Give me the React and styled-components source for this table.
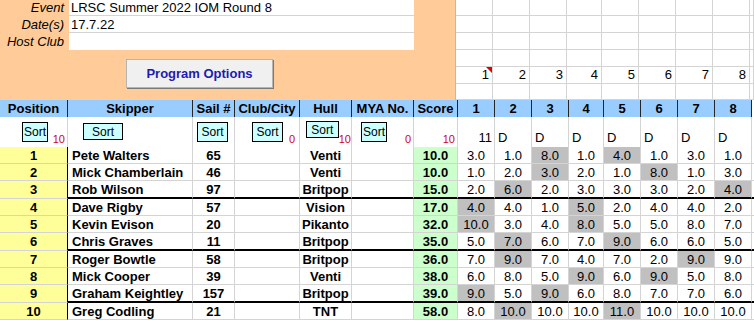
import React from "react";
import styled, { createGlobalStyle } from "styled-components";

const GRID = "#D4D4D4";
const FONT = '"Liberation Sans", Arial, sans-serif';
const COLS = [68, 125, 42, 65, 52, 62, 44, 37, 37, 37, 35, 37, 37, 37, 37];
const RACE_W = COLS.slice(7);

const GlobalStyle = createGlobalStyle`
  html, body { margin: 0; padding: 0; background: #fff; }
  body { font-family: ${FONT}; color: #000; }
  #root { width: 754px; height: 320px; overflow: hidden; }
`;

const Sheet = styled.div`
  display: flex;
  flex-direction: column;
  width: 754px;
`;

const TopBand = styled.div`
  display: flex;
  height: 100px;
`;

const EventPanel = styled.div`
  box-sizing: border-box;
  width: 458px;
  background: #ffcc99;
  border-right: 1px solid #c4b8aa;
  display: flex;
  flex-direction: column;
`;

const InfoGrid = styled.div`
  display: grid;
  grid-template-columns: 69px 345px;
  grid-template-rows: 16px 17px 17px;
`;

const InfoLabel = styled.div`
  font-style: italic;
  font-size: 13px;
  text-align: right;
  padding-right: 5px;
  line-height: ${(p) => p.$lh}px;
  box-sizing: border-box;
`;

const InfoValue = styled.div`
  box-sizing: border-box;
  background: #fff;
  font-size: 13px;
  padding-left: 2px;
  line-height: ${(p) => p.$lh}px;
  border-bottom: ${(p) => (p.$last ? "none" : `1px solid ${GRID}`)};
`;

const OptionsButton = styled.button`
  box-sizing: border-box;
  margin: 9px 0 0 126px;
  width: 147px;
  height: 29px;
  padding: 0;
  background: #f0f0f0;
  border: 1px solid #b4b4b4;
  box-shadow: 1px 1px 0 #7a7a7a;
  font: bold 13px ${FONT};
  color: #1c1cb0;
  cursor: pointer;
`;

const RaceTop = styled.div`
  flex: 1;
  display: grid;
  grid-template-columns: ${RACE_W.map((w) => w + "px").join(" ")} 1fr;
  grid-template-rows: 16px 17px 17px 17px 17px 16px;
`;

const TopCell = styled.div`
  position: relative;
  box-sizing: border-box;
  border-right: 1px solid ${GRID};
  border-bottom: 1px solid ${GRID};
  font-size: 13px;
  text-align: right;
  padding-right: 3px;
  line-height: 16px;
  ${(p) =>
    p.$note &&
    `&::after {
      content: "";
      position: absolute;
      top: 0;
      right: 0;
      border-top: 6px solid #e00000;
      border-left: 6px solid transparent;
    }`}
`;

const Table = styled.div`
  display: grid;
  grid-template-columns: ${COLS.map((w) => w + "px").join(" ")} 1fr;
`;

const HeadCell = styled.div`
  box-sizing: border-box;
  height: 17px;
  background: ${(p) => (p.$blank ? "#fff" : "#99ccff")};
  border-right: ${(p) => (p.$blank ? "none" : "1px solid #262626")};
  font-size: 13px;
  font-weight: 700;
  text-align: center;
  line-height: 17px;
  white-space: nowrap;
`;

const SortCell = styled.div`
  box-sizing: border-box;
  height: 30px;
  display: flex;
  align-items: flex-start;
  padding: ${(p) => p.$pt ?? 5}px 0 0 ${(p) => p.$pl ?? 0}px;
  border-right: ${(p) => (p.$blank ? "none" : `1px solid ${GRID}`)};
`;

const SortButton = styled.button`
  box-sizing: border-box;
  width: ${(p) => p.$w}px;
  height: ${(p) => p.$h}px;
  padding: 0;
  border: 1px solid #000;
  background: #ccffff;
  font: 12px ${FONT};
  color: #000;
  display: flex;
  align-items: center;
  justify-content: center;
`;

const Count = styled.span`
  margin-left: auto;
  align-self: flex-end;
  font-size: 11px;
  line-height: 12px;
  color: #d0021b;
  padding: 0 ${(p) => p.$pr ?? 2}px 2px 0;
`;

const FlagCell = styled.div`
  box-sizing: border-box;
  height: 30px;
  border-right: 1px solid ${GRID};
  display: flex;
  align-items: flex-end;
  justify-content: ${(p) => (p.$right ? "flex-end" : "flex-start")};
  padding: 0 ${(p) => (p.$right ? 2 : 0)}px 2px ${(p) => (p.$right ? 0 : 3)}px;
  font-size: 13px;
  line-height: 15px;
`;

const DataCell = styled.div`
  box-sizing: border-box;
  height: ${(p) => p.$h}px;
  padding-top: 1px;
  border-right: ${(p) => (p.$blank ? "none" : `1px solid ${p.$edge ? "#000" : GRID}`)};
  border-bottom: ${(p) => (p.$thick ? "2px solid #000" : `1px solid ${GRID}`)};
  background: ${(p) => p.$bg || "#fff"};
  font-size: 13px;
  font-weight: ${(p) => (p.$bold ? 700 : 400)};
  text-align: ${(p) => (p.$left ? "left" : "center")};
  padding-left: ${(p) => (p.$left ? 4 : 0)}px;
  line-height: 15px;
  white-space: nowrap;
`;

const rows = [
  ["Pete Walters", "65", "Venti", 10, [3, 1, 8, 1, 4, 1, 3, 1], [3, 5]],
  ["Mick Chamberlain", "46", "Venti", 10, [1, 2, 3, 2, 1, 8, 1, 3], [3, 6]],
  ["Rob Wilson", "97", "Britpop", 15, [2, 6, 2, 3, 3, 3, 2, 4], [2, 8]],
  ["Dave Rigby", "57", "Vision", 17, [4, 4, 1, 5, 2, 4, 4, 2], [1, 4]],
  ["Kevin Evison", "20", "Pikanto", 32, [10, 3, 4, 8, 5, 5, 8, 7], [1, 4]],
  ["Chris Graves", "11", "Britpop", 35, [5, 7, 6, 7, 9, 6, 6, 5], [2, 5]],
  ["Roger Bowtle", "58", "Britpop", 36, [7, 9, 7, 4, 7, 2, 9, 9], [2, 7]],
  ["Mick Cooper", "39", "Venti", 38, [6, 8, 5, 9, 6, 9, 5, 8], [4, 6]],
  ["Graham Keightley", "157", "Britpop", 39, [9, 5, 9, 6, 8, 7, 7, 6], [1, 3]],
  ["Greg Codling", "21", "TNT", 58, [8, 10, 10, 10, 11, 10, 10, 10], [2, 5]],
];

const headers = ["Position", "Skipper", "Sail #", "Club/City", "Hull", "MYA No.", "Score", "1", "2", "3", "4", "5", "6", "7", "8"];

const sorts = [
  { pl: 22, w: 26, h: 20, count: "10", pr: 2 },
  { pl: 15, w: 40, h: 17, pt: 6 },
  { pl: 4, w: 31, h: 20 },
  { pl: 17, w: 31, h: 20, count: "0", pr: 4 },
  { pl: 6, w: 36, h: 17, pt: 4, count: "10", pr: 0 },
  { pl: 9, w: 26, h: 20, count: "0", pr: 2 },
];

export default function App() {
  return (
    <Sheet>
      <GlobalStyle />
      <TopBand>
        <EventPanel>
          <InfoGrid>
            <InfoLabel $lh={15}>Event</InfoLabel>
            <InfoValue $lh={15}>LRSC Summer 2022 IOM Round 8</InfoValue>
            <InfoLabel $lh={18}>Date(s)</InfoLabel>
            <InfoValue $lh={18}>17.7.22</InfoValue>
            <InfoLabel $lh={18}>Host Club</InfoLabel>
            <InfoValue $lh={18} $last />
          </InfoGrid>
          <OptionsButton>Program Options</OptionsButton>
        </EventPanel>
        <RaceTop>
          {Array.from({ length: 6 * 9 }, (_, i) => {
            const r = Math.floor(i / 9);
            const c = i % 9;
            const label = r === 4 && c < 8 ? String(c + 1) : "";
            return (
              <TopCell key={i} $note={r === 4 && c === 0}>
                {label}
              </TopCell>
            );
          })}
        </RaceTop>
      </TopBand>
      <Table>
        {headers.map((h) => (
          <HeadCell key={h}>{h}</HeadCell>
        ))}
        <HeadCell $blank />

        {sorts.map((s, i) => (
          <SortCell key={i} $pl={s.pl} $pt={s.pt}>
            <SortButton $w={s.w} $h={s.h}>Sort</SortButton>
            {s.count && <Count $pr={s.pr}>{s.count}</Count>}
          </SortCell>
        ))}
        <SortCell>
          <Count $pr={2}>10</Count>
        </SortCell>
        <FlagCell $right>11</FlagCell>
        {Array.from({ length: 7 }, (_, i) => (
          <FlagCell key={i}>D</FlagCell>
        ))}
        <SortCell $blank />

        {rows.map(([name, sail, hull, score, races, drops], i) => {
          const thick = i === 2 || i === 5 || i === 8;
          const h = thick ? 18 : 17;
          return (
            <React.Fragment key={name}>
              <DataCell $h={h} $edge $bold $bg="#ffff99">{i + 1}</DataCell>
              <DataCell $h={h} $thick={thick} $bold $left>{name}</DataCell>
              <DataCell $h={h} $thick={thick} $bold>{sail}</DataCell>
              <DataCell $h={h} $thick={thick} />
              <DataCell $h={h} $thick={thick} $bold>{hull}</DataCell>
              <DataCell $h={h} $thick={thick} />
              <DataCell $h={h} $thick={thick} $bold $bg="#ccffcc">{score.toFixed(1)}</DataCell>
              {races.map((v, j) => (
                <DataCell
                  key={j}
                  $h={h}
                  $thick={thick}
                  $bg={drops.includes(j + 1) ? "#c0c0c0" : undefined}
                >
                  {v.toFixed(1)}
                </DataCell>
              ))}
              <DataCell $h={h} $thick={thick} $blank />
            </React.Fragment>
          );
        })}
      </Table>
    </Sheet>
  );
}
